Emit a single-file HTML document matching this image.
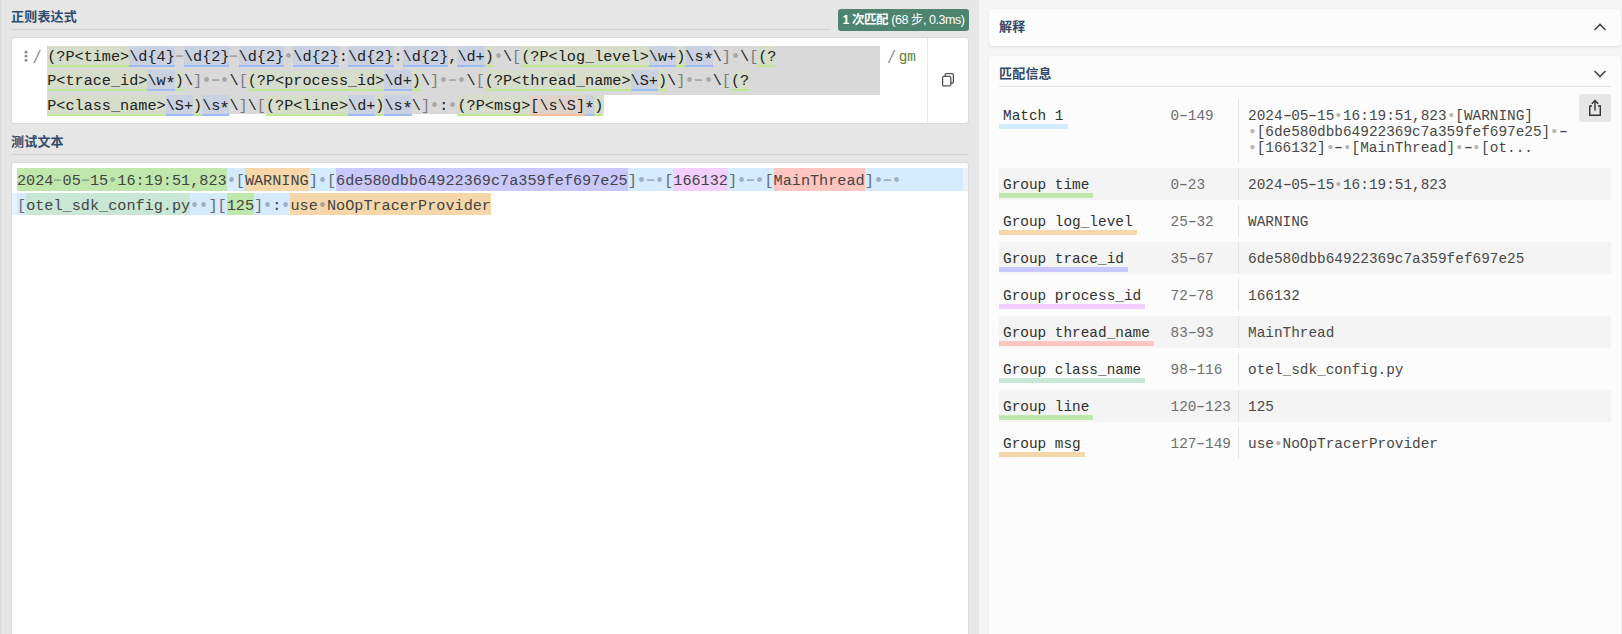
<!DOCTYPE html>
<html lang="zh-CN">
<head>
<meta charset="utf-8">
<title>regex101</title>
<style>
*{box-sizing:border-box;margin:0;padding:0}
html,body{width:1622px;height:634px;overflow:hidden}
body{position:relative;background:#e6e6e6;font-family:"Liberation Sans","Noto Sans CJK SC",sans-serif;color:#333}
.abs{position:absolute}
u,i,em{text-decoration:none;font-style:normal}
em{display:inline-block;transform-origin:50% 20%;transform:scaleY(1.17)}
u{display:inline-block;width:1ch;text-align:center}
u.k{transform:scale(1.15)}
u.h{transform:translateY(-0.5px) scale(1.7,1.4)}
u.h2{transform:translateY(-0.8px) scale(1.6,1.2);color:inherit !important}
u.k2{transform:scale(1.05)}
#leftedge{left:0;top:0;width:1px;height:634px;background:#d8d8d8}
#right{left:979px;top:0;width:643px;height:634px;background:#f5f5f5}
.title{font-size:13px;letter-spacing:0.2px;margin-top:0.3px;font-weight:bold;color:#2f4a6e;line-height:16px;white-space:nowrap}
.hr{height:1px;background:#d4d4d4}
#badge{left:838px;top:9px;width:131px;height:22px;background:#4c8470;border-radius:3px;color:#fff;font-size:12.5px;line-height:22px;text-align:center;white-space:nowrap;letter-spacing:-0.45px}
#badge b{font-weight:bold}
.box{background:#fff;border:1px solid #dadada;border-radius:3px}
#rx{left:11px;top:37px;width:958px;height:87px}
#tt{left:11px;top:162px;width:958px;height:480px}
.mono{font-family:"Liberation Mono","Noto Sans CJK SC",monospace;white-space:pre}
.code{font-size:15.2px;line-height:24.32px;height:24.32px;color:#222}
/* regex editor */
#rxsel1{left:47px;top:46px;width:833px;height:49px;background:#d9d9d9}
#rxsel2{left:47px;top:94px;width:557px;height:20px;background:#d9d9d9}
.rxl{left:47.2px}
.rxl span{padding:2.02px 0 0.96px 0}
.rxl u{color:#a8a8a8}
.rxl i{color:#7c7c7c}
s{text-decoration:none;display:inline-block;width:1ch;text-align:center;transform:translateY(3.4px) scale(1.15)}
.g{background:rgba(205,232,160,.26);box-shadow:inset 0 -2px 0 #c0e792}
.m{background:rgba(170,196,247,.32);box-shadow:inset 0 -2px 0 #9ebdf7}
.c{background:rgba(240,200,170,.30);box-shadow:inset 0 -2px 0 #f0c19b}
.flag{left:887px;top:45.08px;color:#8a8a8a}
.flag b{font-weight:normal;color:#5c8030;font-size:14.4px;margin-left:2.5px}
.delim{left:32.6px;top:45.08px;color:#8a8a8a}
#vdiv{left:927px;top:38px;width:1px;height:85px;background:#ebebeb}
/* test text */
.ttl{left:17px;color:#444}
.ttl span{padding:4.17px 0 0.43px 0}
.ttl u{color:rgba(70,90,110,.42)}
.ttl i{color:#6a6a6a}
.g0{background:#d5ebff}
.g1{background:#c1e8ac}
.g2{background:#f6d7a9}
.g3{background:#c8c8ff}
.g4{background:#f2cfff}
.g5{background:#ffc5bf}
.g6{background:#c8e7d6}
/* right */
.card{background:#fcfcfc;border-radius:4px;box-shadow:0 1px 2.5px rgba(0,0,0,.10)}
#card1{left:989px;top:9px;width:632px;height:37px}
#card2{left:989px;top:56px;width:632px;height:600px}
.mi{font-size:14.4px;line-height:16px;height:16px}
.lab{left:1003px;color:#303030}
.rng{left:1170.5px;color:#6e6e6e}
.val{left:1248px;color:#484848}
.val u{color:#b4b4b4}
.rowbg{left:999px;width:612px;height:32px;background:#f4f4f4}
.cellb{left:1238px;width:1px;background:#e4e4e4}
.bar{left:999px;height:4.7px}
</style>
</head>
<body>
<div id="leftedge" class="abs"></div>
<div id="right" class="abs"></div>

<div class="abs title" style="left:11px;top:9px">正则表达式</div>
<div class="abs hr" style="left:11px;top:29px;width:819px"></div>
<div id="badge" class="abs"><b>1 次匹配</b> (68 步, 0.3ms)</div>

<div id="rx" class="abs box"></div>
<div id="rxsel1" class="abs"></div>
<div id="rxsel2" class="abs"></div>
<div id="vdiv" class="abs"></div>
<svg class="abs" style="left:23px;top:50px" width="6" height="14" viewBox="0 0 6 14"><circle cx="3" cy="2.2" r="1.4" fill="#8a8a8a"/><circle cx="3" cy="6.2" r="1.4" fill="#8a8a8a"/><circle cx="3" cy="10.3" r="1.4" fill="#8a8a8a"/></svg>
<div class="abs mono code delim"><em>/</em></div>
<div class="abs mono code rxl" style="top:45.08px"><span class="g">(?P&lt;time&gt;</span><span class="m">\d{4}</span><u class="h">-</u><span class="m">\d{2}</span><u class="h">-</u><span class="m">\d{2}</span><u class="k">•</u><span class="m">\d{2}</span>:<span class="m">\d{2}</span>:<span class="m">\d{2}</span>,<span class="m">\d+</span><span class="g">)</span><u class="k">•</u>\<i>[</i><span class="g">(?P&lt;log_level&gt;</span><span class="m">\w+</span><span class="g">)</span><span class="m">\s<s>*</s></span>\<i>]</i><u class="k">•</u>\<i>[</i><span class="g">(?</span></div>
<div class="abs mono code rxl" style="top:69.40px"><span class="g">P&lt;trace_id&gt;</span><span class="m">\w<s>*</s></span><span class="g">)</span>\<i>]</i><u class="k">•</u><u class="h">-</u><u class="k">•</u>\<i>[</i><span class="g">(?P&lt;process_id&gt;</span><span class="m">\d+</span><span class="g">)</span>\<i>]</i><u class="k">•</u><u class="h">-</u><u class="k">•</u>\<i>[</i><span class="g">(?P&lt;thread_name&gt;</span><span class="m">\S+</span><span class="g">)</span>\<i>]</i><u class="k">•</u><u class="h">-</u><u class="k">•</u>\<i>[</i><span class="g">(?</span></div>
<div class="abs mono code rxl" style="top:93.72px"><span class="g">P&lt;class_name&gt;</span><span class="m">\S+</span><span class="g">)</span><span class="m">\s<s>*</s></span>\<i>]</i>\<i>[</i><span class="g">(?P&lt;line&gt;</span><span class="m">\d+</span><span class="g">)</span><span class="m">\s<s>*</s></span>\<i>]</i><u class="k">•</u>:<u class="k">•</u><span class="g">(?P&lt;msg&gt;</span><span class="c">[\s\S]</span><span class="m"><s>*</s></span><span class="g">)</span></div>
<div class="abs mono code flag"><em>/</em><b>gm</b></div>
<svg class="abs" style="left:941px;top:72px" width="14" height="16" viewBox="0 0 14 16" fill="none" stroke="#555" stroke-width="1.3"><rect x="4.2" y="1.6" width="8.2" height="9.4" rx="1.2"/><rect x="1.6" y="4.4" width="8.2" height="9.4" rx="1.2" fill="#fff"/></svg>

<div class="abs title" style="left:11px;top:134px">测试文本</div>
<div class="abs hr" style="left:11px;top:154px;width:958px"></div>
<div id="tt" class="abs box"></div>
<div class="abs" style="left:900px;top:168px;width:63px;height:23px;background:#d5ebff"></div>
<div class="abs" style="left:963px;top:168px;width:5px;height:23px;background:#e6f2fe"></div>
<div class="abs" style="left:12px;top:193px;width:5px;height:22px;background:#e6f2fe"></div>
<div class="abs mono code ttl" style="top:169.38px"><span class="g1">2024<u class="h">-</u>05<u class="h">-</u>15<u class="k">•</u>16:19:51,823</span><span class="g0"><u class="k">•</u><i>[</i></span><span class="g2">WARNING</span><span class="g0"><i>]</i><u class="k">•</u><i>[</i></span><span class="g3">6de580dbb64922369c7a359fef697e25</span><span class="g0"><i>]</i><u class="k">•</u><u class="h">-</u><u class="k">•</u><i>[</i></span><span class="g4">166132</span><span class="g0"><i>]</i><u class="k">•</u><u class="h">-</u><u class="k">•</u><i>[</i></span><span class="g5">MainThread</span><span class="g0"><i>]</i><u class="k">•</u><u class="h">-</u><u class="k">•</u></span></div>
<div class="abs mono code ttl" style="top:193.70px"><span class="g0"><i>[</i></span><span class="g6">otel_sdk_config.py</span><span class="g0"><u class="k">•</u><u class="k">•</u><i>]</i><i>[</i></span><span class="g1">125</span><span class="g0"><i>]</i><u class="k">•</u>:<u class="k">•</u></span><span class="g2">use<u class="k">•</u>NoOpTracerProvider</span></div>

<div id="card1" class="abs card"></div>
<div id="card2" class="abs card"></div>
<div class="abs title" style="left:999px;top:19px">解释</div>
<svg class="abs" style="left:1593px;top:22px" width="14" height="10" viewBox="0 0 14 10" fill="none" stroke="#444" stroke-width="1.6"><path d="M1.5 8 L7 2.5 L12.5 8"/></svg>
<div class="abs title" style="left:999px;top:66px">匹配信息</div>
<svg class="abs" style="left:1593px;top:69px" width="14" height="10" viewBox="0 0 14 10" fill="none" stroke="#444" stroke-width="1.6"><path d="M1.5 2 L7 7.5 L12.5 2"/></svg>
<div class="abs hr" style="left:999px;top:86px;width:612px;background:#e3e3e3"></div>
<div class="abs cellb" style="top:98.5px;height:64.3px"></div>
<div class="abs bar" style="top:124.2px;width:68.5px;background:#d5ebff"></div>
<div class="abs mono mi lab" style="top:108.36px">Match 1</div>
<div class="abs mono mi rng" style="top:108.36px">0<u class="h2">-</u>149</div>
<div class="abs mono mi val" style="top:108.36px">2024<u class="h2">-</u>05<u class="h2">-</u>15<u class="k2">•</u>16:19:51,823<u class="k2">•</u>[WARNING]</div>
<div class="abs mono mi val" style="top:124.36px"><u class="k2">•</u>[6de580dbb64922369c7a359fef697e25]<u class="k2">•</u><u class="h2">-</u></div>
<div class="abs mono mi val" style="top:140.36px"><u class="k2">•</u>[166132]<u class="k2">•</u><u class="h2">-</u><u class="k2">•</u>[MainThread]<u class="k2">•</u><u class="h2">-</u><u class="k2">•</u>[ot...</div>
<div class="abs rowbg" style="top:167.6px"></div>
<div class="abs cellb" style="top:167.6px;height:32.0px"></div>
<div class="abs bar" style="top:193.0px;width:94.4px;background:#c1e8ac"></div>
<div class="abs mono mi lab" style="top:177.26px">Group time</div>
<div class="abs mono mi rng" style="top:177.26px">0<u class="h2">-</u>23</div>
<div class="abs mono mi val" style="top:177.26px">2024<u class="h2">-</u>05<u class="h2">-</u>15<u class="k2">•</u>16:19:51,823</div>
<div class="abs cellb" style="top:204.6px;height:32.0px"></div>
<div class="abs bar" style="top:230.0px;width:137.6px;background:#f6d7a9"></div>
<div class="abs mono mi lab" style="top:214.26px">Group log_level</div>
<div class="abs mono mi rng" style="top:214.26px">25<u class="h2">-</u>32</div>
<div class="abs mono mi val" style="top:214.26px">WARNING</div>
<div class="abs rowbg" style="top:241.6px"></div>
<div class="abs cellb" style="top:241.6px;height:32.0px"></div>
<div class="abs bar" style="top:267.1px;width:129.0px;background:#c8c8ff"></div>
<div class="abs mono mi lab" style="top:251.26px">Group trace_id</div>
<div class="abs mono mi rng" style="top:251.26px">35<u class="h2">-</u>67</div>
<div class="abs mono mi val" style="top:251.26px">6de580dbb64922369c7a359fef697e25</div>
<div class="abs cellb" style="top:278.6px;height:32.0px"></div>
<div class="abs bar" style="top:304.1px;width:146.3px;background:#f2cfff"></div>
<div class="abs mono mi lab" style="top:288.26px">Group process_id</div>
<div class="abs mono mi rng" style="top:288.26px">72<u class="h2">-</u>78</div>
<div class="abs mono mi val" style="top:288.26px">166132</div>
<div class="abs rowbg" style="top:315.6px"></div>
<div class="abs cellb" style="top:315.6px;height:32.0px"></div>
<div class="abs bar" style="top:341.1px;width:154.9px;background:#ffc5bf"></div>
<div class="abs mono mi lab" style="top:325.26px">Group thread_name</div>
<div class="abs mono mi rng" style="top:325.26px">83<u class="h2">-</u>93</div>
<div class="abs mono mi val" style="top:325.26px">MainThread</div>
<div class="abs cellb" style="top:352.6px;height:32.0px"></div>
<div class="abs bar" style="top:378.1px;width:146.3px;background:#c8e7d6"></div>
<div class="abs mono mi lab" style="top:362.26px">Group class_name</div>
<div class="abs mono mi rng" style="top:362.26px">98<u class="h2">-</u>116</div>
<div class="abs mono mi val" style="top:362.26px">otel_sdk_config.py</div>
<div class="abs rowbg" style="top:389.6px"></div>
<div class="abs cellb" style="top:389.6px;height:32.0px"></div>
<div class="abs bar" style="top:415.1px;width:94.4px;background:#c1e8ac"></div>
<div class="abs mono mi lab" style="top:399.26px">Group line</div>
<div class="abs mono mi rng" style="top:399.26px">120<u class="h2">-</u>123</div>
<div class="abs mono mi val" style="top:399.26px">125</div>
<div class="abs cellb" style="top:426.6px;height:32.0px"></div>
<div class="abs bar" style="top:452.1px;width:85.8px;background:#f6d7a9"></div>
<div class="abs mono mi lab" style="top:436.26px">Group msg</div>
<div class="abs mono mi rng" style="top:436.26px">127<u class="h2">-</u>149</div>
<div class="abs mono mi val" style="top:436.26px">use<u class="k2">•</u>NoOpTracerProvider</div>

<div class="abs" style="left:1579px;top:94px;width:32px;height:28px;background:#e6e6e6;border-radius:3px"></div>
<svg class="abs" style="left:1587px;top:99px" width="16" height="18" viewBox="0 0 16 18" fill="none" stroke="#333" stroke-width="1.4"><path d="M5 7 H2.7 V16.3 H13.3 V7 H11"/><path d="M8 11.5 V1.8 M4.8 4.8 L8 1.6 L11.2 4.8"/></svg>
</body>
</html>
